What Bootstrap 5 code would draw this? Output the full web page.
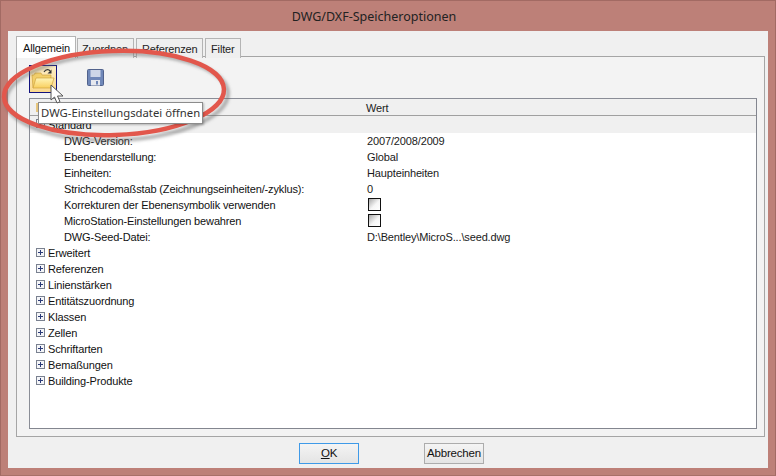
<!DOCTYPE html>
<html lang="de">
<head>
<meta charset="utf-8">
<title>DWG/DXF-Speicheroptionen</title>
<link href="https://cdn.jsdelivr.net/npm/bootstrap@5.3.0/dist/css/bootstrap.min.css" rel="stylesheet">
<style>
html,body{margin:0;width:776px;height:476px;overflow:hidden;background:#bd8078}
body{font-family:"Liberation Sans",Arial,sans-serif;font-size:11px;letter-spacing:-.14px;line-height:16px;color:#111}
.win{position:relative;width:776px;height:476px;border:1px solid #a26a63;border-bottom-color:#a87068;padding:0 7px 7px}
.wtitle{height:30px;line-height:31px;text-align:center;font-size:12.5px;letter-spacing:0;color:#222;font-family:"Noto Sans",sans-serif;padding-right:28px}
.client{height:437px;background:#f0f0f0;padding:6px 3px 0 8px}
.tabrow{height:20px;gap:2px;padding:0;margin:0;list-style:none;position:relative;z-index:1}
.tabitem{height:20px;margin-top:1px;background:#efefef;border:1px solid #b4b4b4;border-bottom:0;padding:3px 0 0 5px;line-height:15px;color:#222}
.tabitem.on{height:22px;margin-top:-1px;background:#fff;width:60px;padding:4px 0 0 6px;color:#111;margin-right:-1px}
.w2{width:57px;padding-left:4px}.w3{width:67px}.w4{width:36px}
.pane{height:381px;margin-top:-1px;border:1px solid #a5a5a5;padding:0 7px 7px 12px;background:#f3f3f3}
.tools{height:41px;position:relative}
.tbtn{position:absolute;left:0;top:8px;width:28px;height:28px;border:1px solid #12127e;background:linear-gradient(#fdeec6,#fbd98e);display:flex;align-items:center;justify-content:center}
.tsave{position:absolute;left:57px;top:11px}
.tree{height:331px;border:1px solid #8a8d96;background:#fff;border-right-color:#83868f;border-bottom-color:#83868f}
.thead{background:#f0f0f0;border-bottom:1px solid #a0a0a0;position:relative;line-height:19px;padding-left:336px;height:17px;color:#222}
.hmark{position:absolute;left:6px;top:4px;width:3px;height:9px;background:#e8c77e}
.stdrow{height:17px;background:#f0f0f0;padding-left:18px;line-height:19px;position:relative}
.trow{height:16px;display:flex;line-height:16px}
.prop{width:337px;padding-left:34px;flex:none}
.val{padding-left:0;color:#1a1a1a}
.grp{padding-left:18px;position:relative}
.expander{position:absolute;left:6px;top:3px;width:9px;height:9px;border:1px solid #7a8190;background:#f4f5f8}
.expander::before{content:"";position:absolute;left:1px;right:1px;top:3px;height:1px;background:#2a3a78}
.expander::after{content:"";position:absolute;top:1px;bottom:1px;left:3px;width:1px;background:#2a3a78}
.chk{width:13px;height:13px;border:1px solid #111;background:linear-gradient(135deg,#a8a8a8,#f6f6f6 55%,#fff);margin:1px 0 0 1px;display:block}
.foot{height:31px;gap:65px;padding:6px 0 0 283px}
.dbtn{width:60px;height:21px;background:linear-gradient(#f4f4f4,#e4e4e4);border:1px solid #acacac;line-height:19px;padding:0;font-size:11.5px;letter-spacing:-.2px;color:#111;border-radius:0}
.dbtn.def{border-color:#3f9ae8}
.ul{text-decoration:underline}
.tip{position:absolute;left:37px;top:101px;width:165px;height:22px;background:#fff;border:1px solid #8c8c8c;font-family:"Noto Sans",sans-serif;font-size:11.3px;letter-spacing:0;line-height:20px;padding-left:2px;color:#333;white-space:nowrap;z-index:5;box-shadow:1px 1px 2px rgba(0,0,0,.25)}
.ring{position:absolute;left:0;top:0;z-index:4;pointer-events:none}
.ptr{position:absolute;left:49px;top:83px;z-index:6}
</style>
</head>
<body>
<div class="win">
  <div class="wtitle">DWG/DXF-Speicheroptionen</div>
  <div class="client">
    <ul class="tabrow d-flex">
      <li class="tabitem on">Allgemein</li>
      <li class="tabitem w2">Zuordnen</li>
      <li class="tabitem w3">Referenzen</li>
      <li class="tabitem w4">Filter</li>
    </ul>
    <div class="pane">
      <div class="tools">
        <div class="tbtn">
          <svg width="24" height="24" viewBox="0 0 24 24"><defs><linearGradient id="fg" x1="0" y1="0" x2="0" y2="1"><stop offset="0" stop-color="#fff5b8"/><stop offset="1" stop-color="#f9cf5e"/></linearGradient></defs><path d="M13 5c2-3 5-3 6-1" fill="none" stroke="#333" stroke-width="1.200"/><path d="M20.500 2.500v4h-4z" fill="#333"/><path d="M2 21 1 8h2l1-2h6l1 2h9v3z" fill="#f2cf6a" stroke="#c79a36" stroke-width=".6"/><path d="M2 21 5 11h18l-3 10z" fill="url(#fg)" stroke="#d0a440" stroke-width=".7"/></svg>
        </div>
        <div class="tsave">
          <svg width="19" height="19" viewBox="0 0 19 19"><path d="M1.500 2.500a1 1 0 0 1 1-1h14a1 1 0 0 1 1 1v14a1 1 0 0 1-1 1h-14a1 1 0 0 1-1-1z" fill="#6f87b8" stroke="#51628c"/><rect x="4.500" y="2" width="10" height="7" fill="#cdd6e8"/><rect x="5" y="12" width="9" height="5.500" fill="#e6e8ee"/><rect x="10" y="13" width="2" height="3.500" fill="#6f87b8"/></svg>
        </div>
      </div>
      <div class="tree">
        <div class="thead"><span class="hmark"></span>Wert</div>
        <div class="stdrow"><span class="expander"></span>Standard</div>
        <div class="trow"><div class="prop">DWG-Version:</div><div class="val">2007/2008/2009</div></div>
        <div class="trow"><div class="prop">Ebenendarstellung:</div><div class="val">Global</div></div>
        <div class="trow"><div class="prop">Einheiten:</div><div class="val">Haupteinheiten</div></div>
        <div class="trow"><div class="prop">Strichcodemaßstab (Zeichnungseinheiten/-zyklus):</div><div class="val">0</div></div>
        <div class="trow"><div class="prop">Korrekturen der Ebenensymbolik verwenden</div><div class="val"><span class="chk"></span></div></div>
        <div class="trow"><div class="prop">MicroStation-Einstellungen bewahren</div><div class="val"><span class="chk"></span></div></div>
        <div class="trow"><div class="prop">DWG-Seed-Datei:</div><div class="val">D:\Bentley\MicroS...\seed.dwg</div></div>
        <div class="trow grp"><span class="expander"></span>Erweitert</div>
        <div class="trow grp"><span class="expander"></span>Referenzen</div>
        <div class="trow grp"><span class="expander"></span>Linienstärken</div>
        <div class="trow grp"><span class="expander"></span>Entitätszuordnung</div>
        <div class="trow grp"><span class="expander"></span>Klassen</div>
        <div class="trow grp"><span class="expander"></span>Zellen</div>
        <div class="trow grp"><span class="expander"></span>Schriftarten</div>
        <div class="trow grp"><span class="expander"></span>Bemaßungen</div>
        <div class="trow grp"><span class="expander"></span>Building-Produkte</div>
      </div>
    </div>
    <div class="foot d-flex">
      <button type="button" class="btn dbtn def"><span class="ul">O</span>K</button>
      <button type="button" class="btn dbtn">Abbrechen</button>
    </div>
  </div>
  <svg class="ring" width="260" height="160" viewBox="0 0 260 160">
    <defs><filter id="sh" x="-10%" y="-20%" width="120%" height="140%"><feGaussianBlur stdDeviation="1.500"/></filter></defs>
    <ellipse cx="116" cy="96" rx="111" ry="43" transform="rotate(-2 116 96)" fill="none" stroke="#666" stroke-opacity=".5" stroke-width="4" filter="url(#sh)"/>
    <ellipse cx="113" cy="92" rx="110" ry="42" transform="rotate(-2 113 92)" fill="none" stroke="#e2574c" stroke-width="4.500"/>
  </svg>
  <div class="tip">DWG-Einstellungsdatei öffnen</div>
  <svg class="ptr" width="16" height="22" viewBox="0 0 16 22"><path d="M1 1v15l3.500-3 2.500 6 3-1.300-2.500-5.700H13z" fill="#fff" stroke="#555" stroke-width="1"/></svg>
</div>
</body>
</html>
